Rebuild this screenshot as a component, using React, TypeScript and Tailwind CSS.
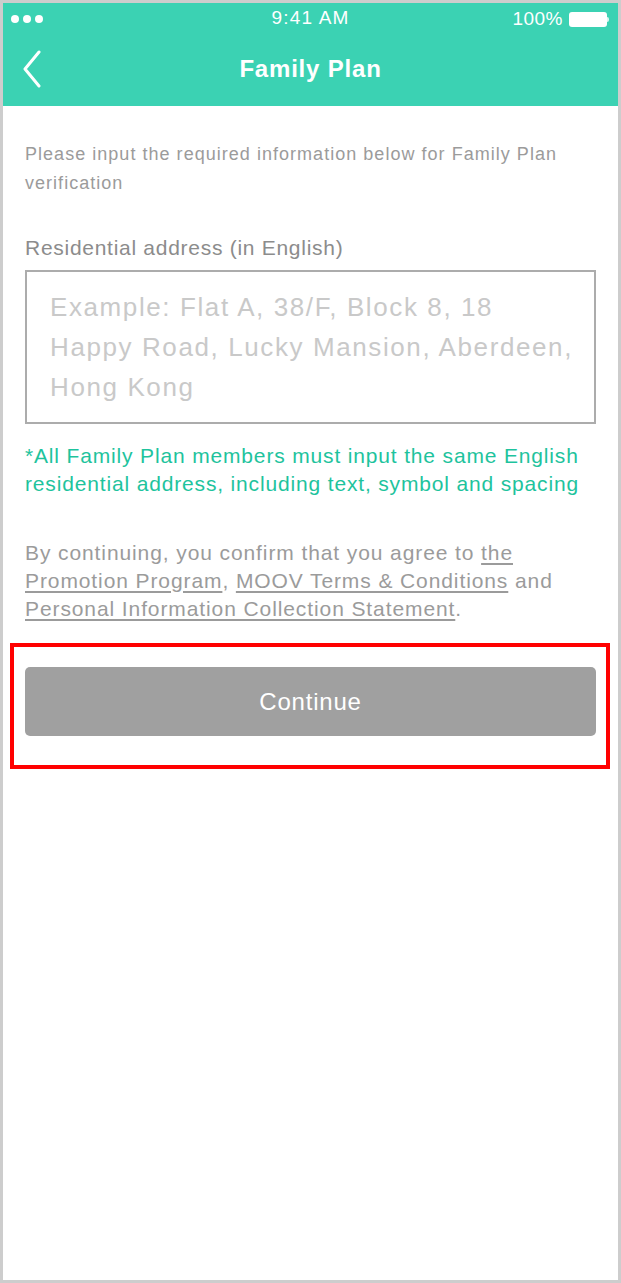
function StatusBar() {
  return (
    <div className="relative flex h-[36px] items-center justify-between px-[8px] pb-[4px] text-white">
      <div className="flex items-center gap-[4px]">
        <span className="h-[8px] w-[8px] rounded-full bg-white" />
        <span className="h-[8px] w-[8px] rounded-full bg-white" />
        <span className="h-[8px] w-[8px] rounded-full bg-white" />
      </div>
      <div className="absolute left-0 right-0 top-0 flex h-[30px] items-center justify-center text-[19px] tracking-[1.2px]">
        9:41 AM
      </div>
      <div className="flex h-[30px] items-center gap-[6px] pr-[1px]">
        <span className="text-[19px] tracking-[0.5px]">100%</span>
        <div className="flex items-center">
          <div className="h-[15px] w-[38px] rounded-[3px] border border-white/80 bg-white" />
          <div className="h-[5px] w-[2px] rounded-r-sm bg-white/80" />
        </div>
      </div>
    </div>
  );
}

export default function App() {
  return (
    <div className="h-[1283px] w-[621px] border-[3px] border-[#cdcdcd] bg-white font-['Liberation_Sans',Arial,sans-serif]">
      {/* Header */}
      <div className="bg-[#3bd2b3]">
        <StatusBar />
        <div className="relative flex h-[67px] items-center justify-center pb-[8px]">
          <svg className="absolute left-[19px] top-[11px]" width="20" height="38" viewBox="0 0 20 38" fill="none">
            <polyline points="17,2 3,19 17,36" stroke="white" strokeWidth="3" strokeLinecap="round" strokeLinejoin="round" />
          </svg>
          <h1 className="text-[24px] font-bold tracking-[0.8px] text-white">Family Plan</h1>
        </div>
      </div>

      {/* Form */}
      <div className="px-[22px] pt-[34px]">
        <p className="text-[18px] leading-[29px] tracking-[1.03px] text-[#9b9b9b]">
          Please input the required information below for Family Plan verification
        </p>

        <p className="mt-[36px] text-[21px] leading-[28px] tracking-[0.72px] text-[#8c8c8c]">Residential address (in English)</p>

        <div className="mt-[8px] border-2 border-[#acacac] py-[15px] pl-[23px] pr-[8px] text-[26px] leading-[40px] tracking-[1.6px] text-[#c9c9c9]">
          <span className="block">Example: Flat A, 38/F, Block 8, 18</span>
          <span className="block whitespace-nowrap">Happy Road, Lucky Mansion, Aberdeen,</span>
          <span className="block">Hong Kong</span>
        </div>

        <p className="mt-[18px] text-[21px] leading-[28px] tracking-[0.84px] text-[#1ec39d]">
          *All Family Plan members must input the same English residential address, including text, symbol and spacing
        </p>

        <p className="mt-[41px] text-[21px] leading-[28px] tracking-[0.9px] text-[#9b9b9b]">
          By continuing, you confirm that you agree to{' '}
          <span className="underline underline-offset-[3px]">the Promotion Program</span>,{' '}
          <span className="underline underline-offset-[3px]">MOOV Terms &amp; Conditions</span> and{' '}
          <span className="underline underline-offset-[3px]">Personal Information Collection Statement</span>.
        </p>

        {/* Highlight frame round the button */}
        <div className="-ml-[15px] -mr-[14px] mt-[20px] border-4 border-[#ff0000] pb-[29px] pl-[11px] pr-[10px] pt-[20px]">
          <button className="flex h-[69px] w-full items-center justify-center rounded-[5px] bg-[#a0a0a0] text-[24px] tracking-[0.8px] text-white">
            Continue
          </button>
        </div>
      </div>
    </div>
  );
}
